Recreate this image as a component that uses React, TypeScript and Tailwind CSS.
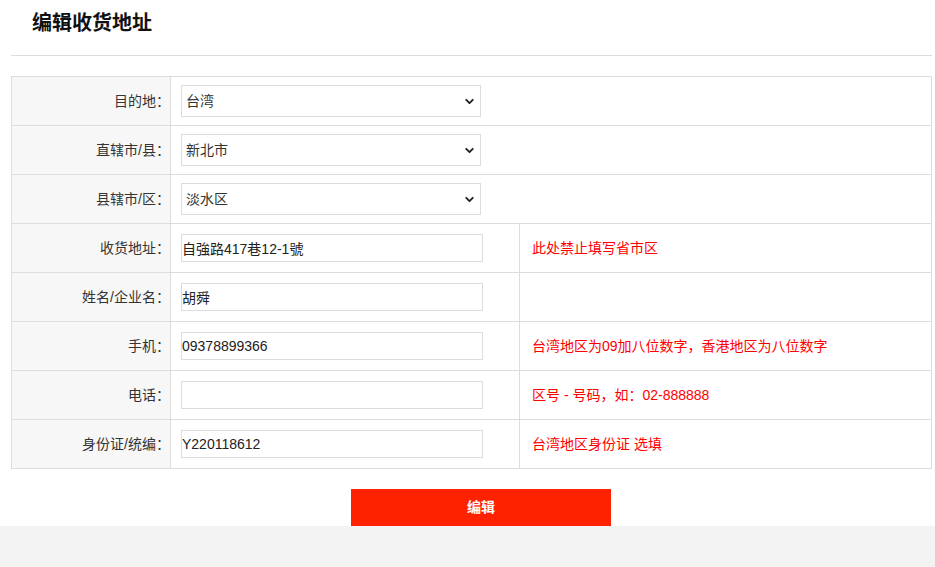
import { ChevronDown } from "lucide-react";

const font = { fontFamily: '"Liberation Sans", Arial, "Noto Sans CJK SC", sans-serif' };

function SelectBox({ value }: { value: string }) {
  return (
    <div className="relative w-[300px] h-[32px]">
      <select
        defaultValue={value}
        className="appearance-none w-full h-full border border-[#dddddd] bg-white pl-[4px] text-[14px] text-[#333] outline-none"
      >
        <option>{value}</option>
      </select>
      <ChevronDown
        size={13}
        strokeWidth={3.5}
        className="absolute right-[5px] top-[10px] text-[#222] pointer-events-none"
      />
    </div>
  );
}

function TextBox({ value }: { value: string }) {
  return (
    <input
      defaultValue={value}
      className="w-[302px] h-[28px] border border-[#dddddd] bg-white px-0 text-[14px] text-[#222] outline-none"
    />
  );
}

type Row = { label: string; kind: "select" | "input"; value: string; tip?: string };

const rows: Row[] = [
  { label: "目的地：", kind: "select", value: "台湾" },
  { label: "直辖市/县：", kind: "select", value: "新北市" },
  { label: "县辖市/区：", kind: "select", value: "淡水区" },
  { label: "收货地址：", kind: "input", value: "自強路417巷12-1號", tip: "此处禁止填写省市区" },
  { label: "姓名/企业名：", kind: "input", value: "胡舜", tip: "" },
  { label: "手机：", kind: "input", value: "09378899366", tip: "台湾地区为09加八位数字，香港地区为八位数字" },
  { label: "电话：", kind: "input", value: "", tip: "区号 - 号码，如：02-888888" },
  { label: "身份证/统编：", kind: "input", value: "Y220118612", tip: "台湾地区身份证 选填" },
];

export default function App() {
  return (
    <div className="w-[935px] h-[567px] bg-white flex flex-col text-[14px] text-[#333]" style={font}>
      <div className="ml-[11px] w-[921px]">
        <div className="h-[56px] border-b border-[#dddddd] pl-[21px] flex items-center">
          <h1 className="text-[20px] font-bold text-[#111] -mt-[9px]">编辑收货地址</h1>
        </div>
        <table className="mt-[20px] w-[921px] border-collapse border border-[#dddddd]">
          <tbody>
            {rows.map((r) => (
              <tr key={r.label} className="h-[49px]">
                <td className="w-[159px] bg-[#f7f7f7] border border-[#dddddd] text-right pr-0 whitespace-nowrap">
                  {r.label}
                </td>
                {r.kind === "select" ? (
                  <td colSpan={2} className="border border-[#dddddd] pl-[10px]">
                    <SelectBox value={r.value} />
                  </td>
                ) : (
                  <>
                    <td className="w-[349px] border border-[#dddddd] pl-[10px]">
                      <TextBox value={r.value} />
                    </td>
                    <td className="border border-[#dddddd] pl-[12px] text-[#ff0000]">{r.tip}</td>
                  </>
                )}
              </tr>
            ))}
          </tbody>
        </table>
        <div className="pt-[20px] pl-[340px]">
          <button className="w-[260px] h-[37px] bg-[#ff2200] text-white font-bold text-[14px]">编辑</button>
        </div>
      </div>
      <div className="flex-1 bg-[#f3f3f3]" />
    </div>
  );
}
